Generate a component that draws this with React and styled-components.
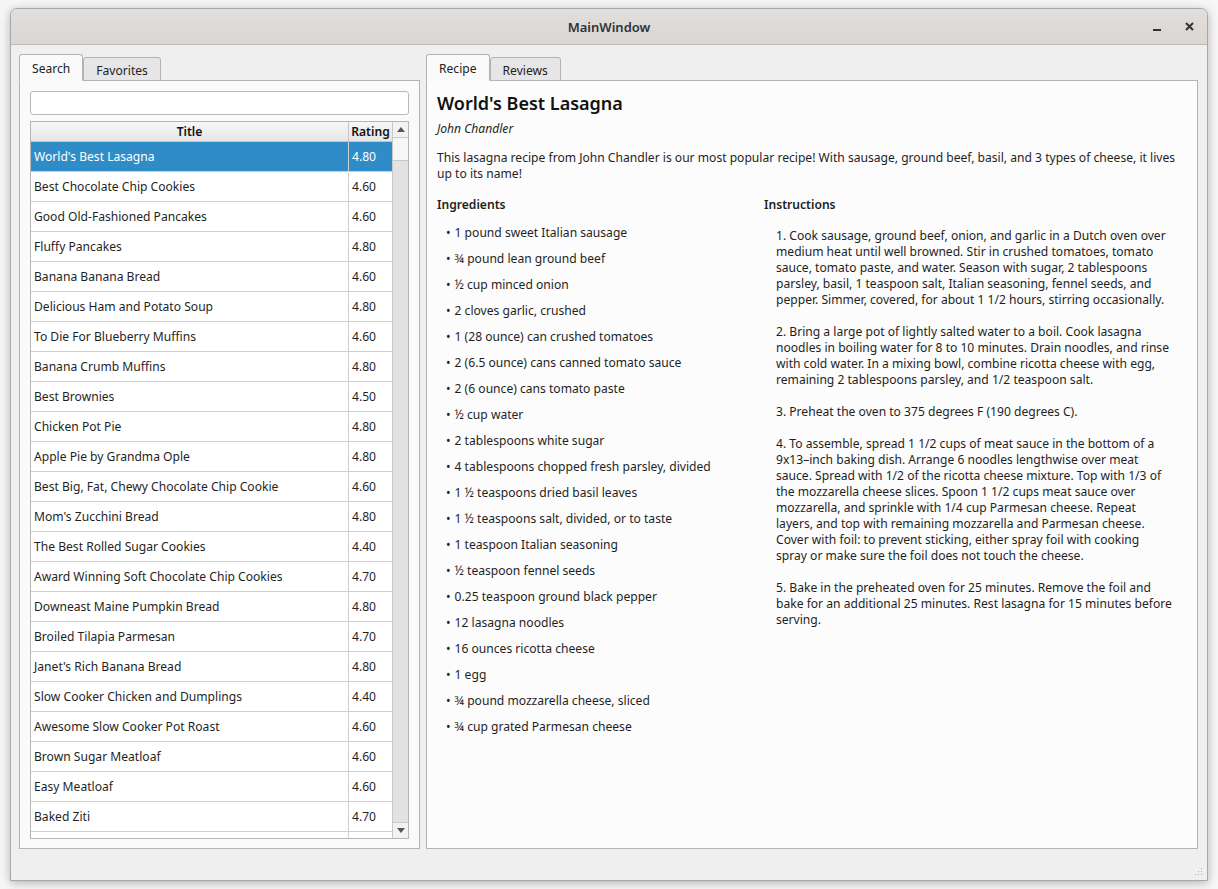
import React from "react";
import styled, { createGlobalStyle } from "styled-components";

const GlobalStyle = createGlobalStyle`
  html, body {
    margin: 0;
    padding: 0;
    background: #f6f6f6;
  }
  body {
    font-family: "Noto Sans", "DejaVu Sans", sans-serif;
    font-size: 12.1px;
    color: #1f1f1f;
  }
`;

const Page = styled.div`
  width: 1218px;
  height: 889px;
  padding: 8px 10px 10px 10px;
  box-sizing: border-box;
`;

const Window = styled.div`
  height: 100%;
  display: flex;
  flex-direction: column;
  background: #efefef;
  border: 1px solid #a8a8a8;
  border-radius: 7px 7px 0 0;
  box-shadow: 0 2px 10px rgba(0, 0, 0, 0.28);
  overflow: hidden;
  position: relative;
`;

const TitleBar = styled.div`
  height: 35px;
  flex-shrink: 0;
  display: flex;
  align-items: center;
  justify-content: center;
  position: relative;
  background: linear-gradient(#e1dedb, #dad6d2);
  border-bottom: 1px solid #bdb9b5;
  font-weight: 600;
  font-size: 13px;
  color: #2e3436;
`;

const TitleButtons = styled.div`
  position: absolute;
  right: 10px;
  top: 0;
  height: 100%;
  display: flex;
  align-items: center;
  gap: 18px;
`;

const Body = styled.div`
  flex: 1;
  display: flex;
  gap: 6px;
  padding: 10px 9px 31px 8px;
  min-height: 0;
`;

const TabWidget = styled.div`
  display: flex;
  flex-direction: column;
  width: ${(p) => p.$width || "auto"};
  flex: ${(p) => (p.$grow ? 1 : "none")};
`;

const TabBar = styled.div`
  display: flex;
  align-items: flex-end;
  height: 26px;
  position: relative;
  z-index: 1;
  margin-bottom: -1px;
`;

const Tab = styled.div`
  box-sizing: border-box;
  height: ${(p) => (p.$active ? "27px" : "24px")};
  padding: 0 12px;
  padding-top: ${(p) => (p.$active ? "1px" : "2px")};
  display: flex;
  align-items: center;
  border: 1px solid #b3b3b3;
  border-bottom: ${(p) => (p.$active ? "1px solid #fafafa" : "1px solid #b3b3b3")};
  border-radius: 3px 3px 0 0;
  background: ${(p) => (p.$active ? "#fafafa" : "#e6e6e6")};
  color: #222;
`;

const Pane = styled.div`
  flex: 1;
  border: 1px solid #b3b3b3;
  background: #fafafa;
  display: flex;
  flex-direction: column;
  min-height: 0;
`;

const SearchPane = styled(Pane)`
  padding: 10px 10px 9px 10px;
  gap: 6px;
`;

const SearchInput = styled.input`
  height: 24px;
  box-sizing: border-box;
  border: 1px solid #b9b9b9;
  border-radius: 3px;
  background: #fff;
  outline: none;
  font-family: inherit;
  font-size: 12.1px;
  padding: 0 6px;
`;

const Table = styled.div`
  flex: 1;
  display: flex;
  border: 1px solid #b5b5b5;
  background: #fff;
  min-height: 0;
`;

const TableView = styled.div`
  flex: 1;
  display: flex;
  flex-direction: column;
  overflow: hidden;
`;

const HeaderRow = styled.div`
  display: grid;
  grid-template-columns: 1fr 43px;
  height: 19px;
  flex-shrink: 0;
  background: linear-gradient(#f7f7f7, #e6e6e6);
  border-bottom: 1px solid #c4c4c4;
`;

const HeaderCell = styled.div`
  display: flex;
  align-items: center;
  justify-content: center;
  font-weight: 600;
  color: #111;
  border-right: ${(p) => (p.$last ? "none" : "1px solid #c4c4c4")};
`;

const Row = styled.div`
  display: grid;
  grid-template-columns: 1fr 43px;
  height: 30px;
  flex-shrink: 0;
  background: ${(p) => (p.$selected ? "#308cc6" : "#fff")};
  color: ${(p) => (p.$selected ? "#fff" : "#1f1f1f")};
`;

const Cell = styled.div`
  display: flex;
  align-items: center;
  padding-left: 3px;
  white-space: nowrap;
  overflow: hidden;
  border-right: ${(p) => (p.$last ? "none" : "1px solid #d0d0d0")};
  border-bottom: 1px solid #d0d0d0;
`;

const ScrollBar = styled.div`
  width: 15px;
  flex-shrink: 0;
  display: flex;
  flex-direction: column;
  background: #e2e2e2;
  border-left: 1px solid #c8c8c8;
`;

const ScrollArrow = styled.div`
  height: 15px;
  display: flex;
  align-items: center;
  justify-content: center;
  background: #f2f2f2;
  border-bottom: ${(p) => (p.$down ? "none" : "1px solid #c8c8c8")};
  border-top: ${(p) => (p.$down ? "1px solid #c8c8c8" : "none")};
`;

const ScrollHandle = styled.div`
  height: 22px;
  background: #f6f6f6;
  border-bottom: 1px solid #c8c8c8;
`;

const ScrollTrack = styled.div`
  flex: 1;
`;

const RecipePane = styled(Pane)`
  padding: 9px 10px 0 10px;
  background: #fcfcfc;
`;

const RecipeTitle = styled.h1`
  margin: 0;
  font-size: 18px;
  font-weight: 600;
  line-height: 26px;
  color: #111;
`;

const Author = styled.div`
  font-style: italic;
  line-height: 18px;
  margin-top: 4px;
`;

const Description = styled.p`
  margin: 12px 0 0 0;
  line-height: 16px;
`;

const Columns = styled.div`
  display: grid;
  grid-template-columns: 327px 1fr;
  margin-top: 15px;
`;

const SectionTitle = styled.div`
  font-weight: 600;
  line-height: 16px;
`;

const IngredientList = styled.ul`
  list-style: none;
  margin: 7px 0 0 0;
  padding: 0 0 0 9px;
`;

const Ingredient = styled.li`
  line-height: 26px;
  &::before {
    content: "•";
    margin-right: 4px;
  }
`;

const Step = styled.p`
  margin: 0 14.5px 16px 12px;
  line-height: 16px;
  &:first-of-type {
    margin-top: 15px;
  }
`;

const Grip = styled.svg`
  position: absolute;
  right: 4px;
  bottom: 4px;
`;

const recipes = [
  ["World's Best Lasagna", "4.80"],
  ["Best Chocolate Chip Cookies", "4.60"],
  ["Good Old-Fashioned Pancakes", "4.60"],
  ["Fluffy Pancakes", "4.80"],
  ["Banana Banana Bread", "4.60"],
  ["Delicious Ham and Potato Soup", "4.80"],
  ["To Die For Blueberry Muffins", "4.60"],
  ["Banana Crumb Muffins", "4.80"],
  ["Best Brownies", "4.50"],
  ["Chicken Pot Pie", "4.80"],
  ["Apple Pie by Grandma Ople", "4.80"],
  ["Best Big, Fat, Chewy Chocolate Chip Cookie", "4.60"],
  ["Mom's Zucchini Bread", "4.80"],
  ["The Best Rolled Sugar Cookies", "4.40"],
  ["Award Winning Soft Chocolate Chip Cookies", "4.70"],
  ["Downeast Maine Pumpkin Bread", "4.80"],
  ["Broiled Tilapia Parmesan", "4.70"],
  ["Janet's Rich Banana Bread", "4.80"],
  ["Slow Cooker Chicken and Dumplings", "4.40"],
  ["Awesome Slow Cooker Pot Roast", "4.60"],
  ["Brown Sugar Meatloaf", "4.60"],
  ["Easy Meatloaf", "4.60"],
  ["Baked Ziti", "4.70"],
  ["", ""],
];

const ingredients = [
  "1 pound sweet Italian sausage",
  "¾ pound lean ground beef",
  "½ cup minced onion",
  "2 cloves garlic, crushed",
  "1 (28 ounce) can crushed tomatoes",
  "2 (6.5 ounce) cans canned tomato sauce",
  "2 (6 ounce) cans tomato paste",
  "½ cup water",
  "2 tablespoons white sugar",
  "4 tablespoons chopped fresh parsley, divided",
  "1 ½ teaspoons dried basil leaves",
  "1 ½ teaspoons salt, divided, or to taste",
  "1 teaspoon Italian seasoning",
  "½ teaspoon fennel seeds",
  "0.25 teaspoon ground black pepper",
  "12 lasagna noodles",
  "16 ounces ricotta cheese",
  "1 egg",
  "¾ pound mozzarella cheese, sliced",
  "¾ cup grated Parmesan cheese",
];

const steps = [
  "1. Cook sausage, ground beef, onion, and garlic in a Dutch oven over medium heat until well browned. Stir in crushed tomatoes, tomato sauce, tomato paste, and water. Season with sugar, 2 tablespoons parsley, basil, 1 teaspoon salt, Italian seasoning, fennel seeds, and pepper. Simmer, covered, for about 1 1/2 hours, stirring occasionally.",
  "2. Bring a large pot of lightly salted water to a boil. Cook lasagna noodles in boiling water for 8 to 10 minutes. Drain noodles, and rinse with cold water. In a mixing bowl, combine ricotta cheese with egg, remaining 2 tablespoons parsley, and 1/2 teaspoon salt.",
  "3. Preheat the oven to 375 degrees F (190 degrees C).",
  "4. To assemble, spread 1 1/2 cups of meat sauce in the bottom of a 9x13–inch baking dish. Arrange 6 noodles lengthwise over meat sauce. Spread with 1/2 of the ricotta cheese mixture. Top with 1/3 of the mozzarella cheese slices. Spoon 1 1/2 cups meat sauce over mozzarella, and sprinkle with 1/4 cup Parmesan cheese. Repeat layers, and top with remaining mozzarella and Parmesan cheese. Cover with foil: to prevent sticking, either spray foil with cooking spray or make sure the foil does not touch the cheese.",
  "5. Bake in the preheated oven for 25 minutes. Remove the foil and bake for an additional 25 minutes. Rest lasagna for 15 minutes before serving.",
];

export default function App() {
  return (
    <Page>
      <GlobalStyle />
      <Window>
        <TitleBar>
          MainWindow
          <TitleButtons>
            <svg width="14" height="14" viewBox="0 0 14 14">
              <rect x="2" y="9" width="8" height="2" fill="#2e3436" />
            </svg>
            <svg width="14" height="14" viewBox="0 0 14 14">
              <path d="M3 3 L10 10 M10 3 L3 10" stroke="#2e3436" strokeWidth="2" />
            </svg>
          </TitleButtons>
        </TitleBar>
        <Body>
          <TabWidget $width="401px">
            <TabBar>
              <Tab $active>Search</Tab>
              <Tab>Favorites</Tab>
            </TabBar>
            <SearchPane>
              <SearchInput />
              <Table>
                <TableView>
                  <HeaderRow>
                    <HeaderCell>Title</HeaderCell>
                    <HeaderCell $last>Rating</HeaderCell>
                  </HeaderRow>
                  {recipes.map(([title, rating], i) => (
                    <Row key={i} $selected={i === 0}>
                      <Cell>{title}</Cell>
                      <Cell $last>{rating}</Cell>
                    </Row>
                  ))}
                </TableView>
                <ScrollBar>
                  <ScrollArrow>
                    <svg width="8" height="5" viewBox="0 0 8 5">
                      <path d="M0 5 L4 0 L8 5 Z" fill="#555" />
                    </svg>
                  </ScrollArrow>
                  <ScrollHandle />
                  <ScrollTrack />
                  <ScrollArrow $down>
                    <svg width="8" height="5" viewBox="0 0 8 5">
                      <path d="M0 0 L4 5 L8 0 Z" fill="#555" />
                    </svg>
                  </ScrollArrow>
                </ScrollBar>
              </Table>
            </SearchPane>
          </TabWidget>
          <TabWidget $grow>
            <TabBar>
              <Tab $active>Recipe</Tab>
              <Tab>Reviews</Tab>
            </TabBar>
            <RecipePane>
              <RecipeTitle>World's Best Lasagna</RecipeTitle>
              <Author>John Chandler</Author>
              <Description>
                This lasagna recipe from John Chandler is our most popular recipe! With sausage, ground beef, basil, and 3 types of cheese, it lives up to its name!
              </Description>
              <Columns>
                <div>
                  <SectionTitle>Ingredients</SectionTitle>
                  <IngredientList>
                    {ingredients.map((item) => (
                      <Ingredient key={item}>{item}</Ingredient>
                    ))}
                  </IngredientList>
                </div>
                <div>
                  <SectionTitle>Instructions</SectionTitle>
                  {steps.map((s) => (
                    <Step key={s.slice(0, 12)}>{s}</Step>
                  ))}
                </div>
              </Columns>
            </RecipePane>
          </TabWidget>
        </Body>
        <Grip width="10" height="10" viewBox="0 0 10 10">
          {[[8, 2], [8, 5], [5, 5], [8, 8], [5, 8], [2, 8]].map(([x, y]) => (
            <rect key={`${x}-${y}`} x={x} y={y} width="1" height="1" fill="#aaa" />
          ))}
        </Grip>
      </Window>
    </Page>
  );
}
